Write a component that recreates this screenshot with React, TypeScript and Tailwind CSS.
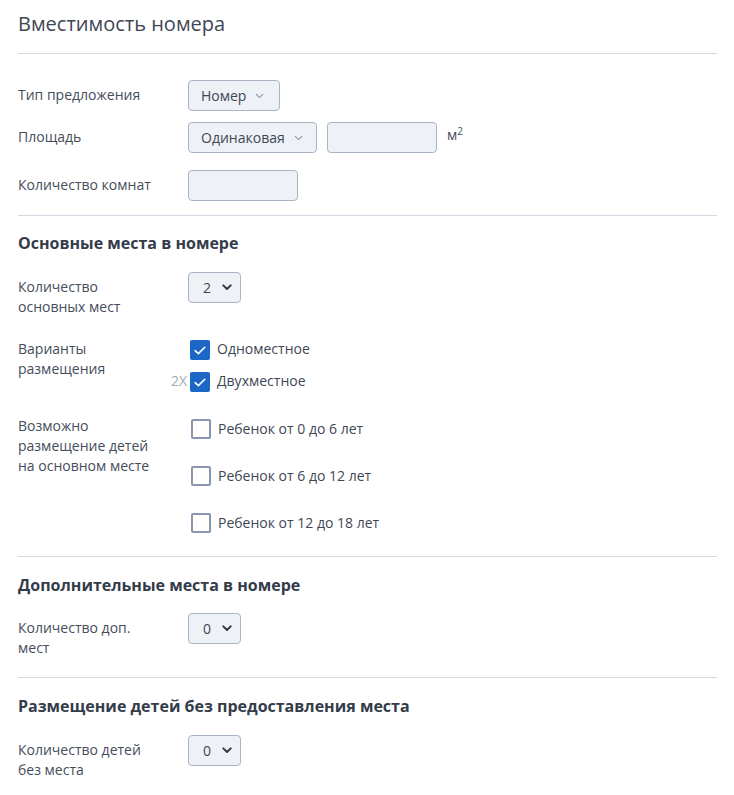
import React from "react";

const font = { fontFamily: '"Open Sans", "Noto Sans", sans-serif' };

function SoftChevron() {
  return (
    <svg width="9" height="6" viewBox="0 0 9 6" className="ml-[9px] mt-[1px]">
      <path d="M1 1.2 L4.5 4.6 L8 1.2" fill="none" stroke="#8a94a3" strokeWidth="1.1" />
    </svg>
  );
}

function BoldChevron() {
  return (
    <svg width="10" height="7" viewBox="0 0 10 7">
      <path d="M1.3 1.4 L5 5 L8.7 1.4" fill="none" stroke="#2f3a4a" strokeWidth="2" strokeLinecap="round" strokeLinejoin="round" />
    </svg>
  );
}

function DropButton({ text, width }: { text: string; width: string }) {
  return (
    <div
      className={`${width} h-[31px] flex items-center pl-[12px] rounded-[4px] border border-[#a9b5c6] bg-[#eef1f5] text-[14px] text-[#3f4756]`}
    >
      <span className="-mt-[1px]">{text}</span>
      <SoftChevron />
    </div>
  );
}

function NumberSelect({ value }: { value: string }) {
  return (
    <div className="w-[53px] h-[31px] flex items-center justify-between pl-[14px] pr-[8px] rounded-[4px] border border-[#a9b5c6] bg-[#eef1f5] text-[14px] text-[#3f4756]">
      <span>{value}</span>
      <BoldChevron />
    </div>
  );
}

function Field({ width }: { width: string }) {
  return <div className={`${width} h-[31px] rounded-[4px] border border-[#a9b5c6] bg-[#eef1f5]`} />;
}

function Check({ checked }: { checked: boolean }) {
  if (checked) {
    return (
      <div className="w-[20px] h-[20px] rounded-[2px] bg-[#1c66c4] flex items-center justify-center">
        <svg width="12" height="9" viewBox="0 0 12 9">
          <path d="M1.2 4.6 L4.4 7.6 L10.8 1.3" fill="none" stroke="#ffffff" strokeWidth="1.6" strokeLinecap="round" strokeLinejoin="round" />
        </svg>
      </div>
    );
  }
  return <div className="w-[20px] h-[20px] rounded-[2px] border-2 border-[#8896b0] bg-white" />;
}

function Divider() {
  return <div className="h-px bg-[#d2d9e2]" />;
}

function Label({ children }: { children: React.ReactNode }) {
  return <div className="w-[170px] shrink-0 text-[14px] leading-[20px] text-[#454d5b]">{children}</div>;
}

function Heading({ children }: { children: React.ReactNode }) {
  return <div className="text-[16px] leading-[24px] font-bold text-[#343c4a]">{children}</div>;
}

export default function App() {
  return (
    <div className="w-[734px] min-h-[795px] bg-white px-[18px] pr-[17px]" style={font}>
      <div className="pt-[10px] pb-[15px] text-[20px] leading-[28px] text-[#3e4654]">Вместимость номера</div>
      <Divider />

      <div className="pt-[26px] pb-[14px] flex flex-col">
        <div className="flex items-center">
          <div className="-mt-[2px]">
            <Label>Тип предложения</Label>
          </div>
          <DropButton text="Номер" width="w-[92px]" />
        </div>
        <div className="flex items-center mt-[11px]">
          <div className="-mt-[1px]">
            <Label>Площадь</Label>
          </div>
          <DropButton text="Одинаковая" width="w-[129px]" />
          <div className="ml-[10px]">
            <Field width="w-[110px]" />
          </div>
          <div className="ml-[10px] text-[14px] text-[#454d5b] -mt-[6px]">
            м<sup className="text-[10px]">2</sup>
          </div>
        </div>
        <div className="flex items-center mt-[17px]">
          <div className="-mt-[1px]">
            <Label>Количество комнат</Label>
          </div>
          <Field width="w-[110px]" />
        </div>
      </div>
      <Divider />

      <div className="pt-[15px] pb-[23px]">
        <Heading>Основные места в номере</Heading>
        <div className="flex items-start mt-[17px]">
          <div className="pt-[5px]">
            <Label>
              Количество
              <br />
              основных мест
            </Label>
          </div>
          <NumberSelect value="2" />
        </div>
        <div className="flex items-start mt-[22px]">
          <Label>
            Варианты
            <br />
            размещения
          </Label>
          <div className="flex flex-col gap-[12px] pl-[2px] pt-[1px]">
            <div className="flex items-center gap-[7px] text-[14px] text-[#3f4756]">
              <Check checked />
              <span className="-mt-[3px]">Одноместное</span>
            </div>
            <div className="relative flex items-center gap-[7px] text-[14px] text-[#3f4756]">
              <span className="absolute right-full mr-[3px] -mt-[3px] text-[#a2abb8]">2X</span>
              <Check checked />
              <span className="-mt-[3px]">Двухместное</span>
            </div>
          </div>
        </div>
        <div className="flex items-start mt-[24px]">
          <Label>
            Возможно
            <br />
            размещение детей
            <br />
            на основном месте
          </Label>
          <div className="flex flex-col gap-[27px] pl-[3px] pt-[3px]">
            {["Ребенок от 0 до 6 лет", "Ребенок от 6 до 12 лет", "Ребенок от 12 до 18 лет"].map((t) => (
              <div key={t} className="flex items-center gap-[7px] text-[14px] text-[#3f4756]">
                <Check checked={false} />
                <span className="-mt-[2px]">{t}</span>
              </div>
            ))}
          </div>
        </div>
      </div>
      <Divider />

      <div className="pt-[16px] pb-[19px]">
        <Heading>Дополнительные места в номере</Heading>
        <div className="flex items-start mt-[16px]">
          <div className="pt-[5px]">
            <Label>
              Количество доп.
              <br />
              мест
            </Label>
          </div>
          <NumberSelect value="0" />
        </div>
      </div>
      <Divider />

      <div className="pt-[16px] pb-[20px]">
        <Heading>Размещение детей без предоставления места</Heading>
        <div className="flex items-start mt-[17px]">
          <div className="pt-[5px]">
            <Label>
              Количество детей
              <br />
              без места
            </Label>
          </div>
          <NumberSelect value="0" />
        </div>
      </div>
    </div>
  );
}
